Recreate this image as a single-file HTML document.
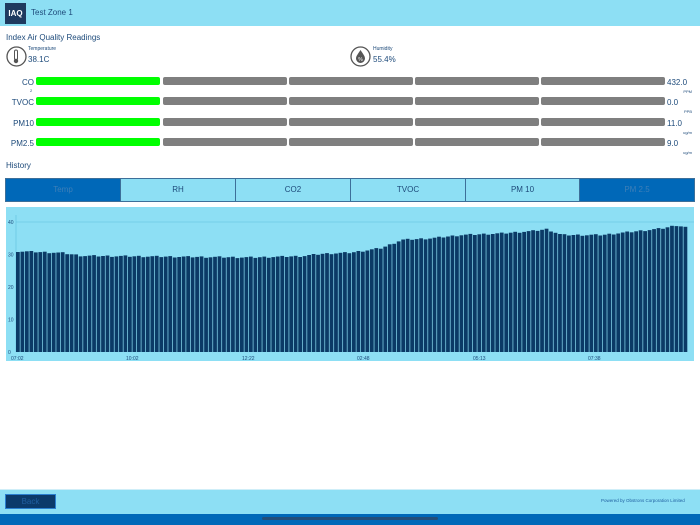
<!DOCTYPE html><html><head><meta charset="utf-8"><style>
*{margin:0;padding:0;box-sizing:border-box}
body{width:700px;height:525px;position:relative;background:#fff;font-family:"Liberation Sans",sans-serif;color:#1d4a7a;overflow:hidden}
.hdr{position:absolute;left:0;top:0;width:700px;height:26px;background:#8ddff4}
.logo{position:absolute;left:5px;top:3px;width:21px;height:21px;background:#1e3a5f;color:#fff;font-weight:bold;font-size:8px;line-height:21px;text-align:center}
.t{position:absolute;white-space:nowrap}
.lb{position:absolute;right:666px;font-size:8px;white-space:nowrap}
.bar{position:absolute;height:8px;border-radius:2px;background:#7f7f7f}
.g{background:#00ff00}
.tab{position:absolute;top:178px;height:24px;background:#8ddff4;border:1px solid #3d6f99;font-size:8px;text-align:center;line-height:22px;color:#1d4a7a}
.sel{background:#0068b8;color:#3d7fb8}
.u{position:absolute;right:8px;font-size:4px;white-space:nowrap}
</style></head><body>
<div class="hdr"><div class="logo">IAQ</div><div class="t" style="left:31px;top:8px;font-size:8px">Test Zone 1</div></div>
<div class="t" style="left:6px;top:33px;font-size:8px">Index Air Quality Readings</div>
<svg style="position:absolute;left:6px;top:46px" width="21" height="21"><circle cx="10.5" cy="10.5" r="9.5" fill="none" stroke="#555" stroke-width="1.3"/><rect x="8.5" y="4" width="3" height="10" rx="1.5" fill="none" stroke="#555"/><circle cx="10" cy="15" r="2.2" fill="#555"/></svg>
<div class="t" style="left:28px;top:46px;font-size:5px">Temperature</div>
<div class="t" style="left:28px;top:55px;font-size:8px">38.1C</div>
<svg style="position:absolute;left:350px;top:46px" width="21" height="21"><circle cx="10.5" cy="10.5" r="9.5" fill="none" stroke="#555" stroke-width="1.3"/><path d="M10.5 4 C8 8 6 10 6 12.5 A4.5 4.5 0 0 0 15 12.5 C15 10 13 8 10.5 4Z" fill="#555"/><text x="10.5" y="15" font-size="5" fill="#fff" text-anchor="middle">%</text></svg>
<div class="t" style="left:373px;top:46px;font-size:5px">Humidity</div>
<div class="t" style="left:373px;top:55px;font-size:8px">55.4%</div>

<div class="lb" style="top:78px">CO</div><div class="t" style="left:30px;top:88px;font-size:4px">2</div>
<div class="lb" style="top:98px">TVOC</div>
<div class="lb" style="top:119px">PM10</div>
<div class="lb" style="top:139px">PM2.5</div>
<div id="bars"></div>
<div class="t" style="left:667px;top:78px;font-size:8px">432.0</div><div class="u" style="top:89px">PPM</div>
<div class="t" style="left:667px;top:98px;font-size:8px">0.0</div><div class="u" style="top:109px">PPB</div>
<div class="t" style="left:667px;top:119px;font-size:8px">11.0</div><div class="u" style="top:130px">ug/m</div>
<div class="t" style="left:667px;top:139px;font-size:8px">9.0</div><div class="u" style="top:150px">ug/m</div>

<div class="t" style="left:6px;top:161px;font-size:8px">History</div>
<div class="tab sel" style="left:5px;width:116px">Temp</div>
<div class="tab" style="left:120px;width:116px">RH</div>
<div class="tab" style="left:235px;width:116px">CO2</div>
<div class="tab" style="left:350px;width:116px">TVOC</div>
<div class="tab" style="left:465px;width:115px">PM 10</div>
<div class="tab sel" style="left:579px;width:116px">PM 2.5</div>
<svg id="ch" style="position:absolute;left:6px;top:207px" width="688" height="154"></svg>

<div style="position:absolute;left:0;top:489px;width:700px;height:25px;background:#8ddff4;border-top:1px solid #cfeef8"></div>
<div style="position:absolute;left:5px;top:494px;width:51px;height:15px;background:#0b3a6a;border:1px solid #2a7fd0;color:#1f5fa0;font-size:8px;text-align:center;line-height:13px">Back</div>
<div class="t" style="left:601px;top:498px;font-size:4.5px;color:#1f5fa0">Powered by Obstrons Corporation Limited</div>
<div style="position:absolute;left:0;top:514px;width:700px;height:11px;background:#0068b8"></div>
<div style="position:absolute;left:262px;top:517px;width:176px;height:3px;border-radius:2px;background:#244e78"></div>
<script>
var b=document.getElementById('bars'),h='';
[80,100,121,141].forEach(function(y){[36,163,289,415,541].forEach(function(x,i){h+='<div class="bar'+(i==0?' g':'')+'" style="left:'+x+'px;top:'+(y-3)+'px;width:124px"></div>';});});
b.innerHTML=h;
var s='<rect width="688" height="154" fill="#8ddff4"/>';
var y0=145,k=3.25,X0=10;
[40].forEach(function(v){s+='<line x1="'+X0+'" x2="688" y1="'+(y0-v*k)+'" y2="'+(y0-v*k)+'" stroke="#5fbfdc" stroke-width="0.6"/>';});
s+='<line x1="'+X0+'" x2="'+X0+'" y1="8" y2="'+y0+'" stroke="#5fbfdc" stroke-width="0.6"/>';
[0,10,20,30,40].forEach(function(v){s+='<text x="2" y="'+(y0-v*k+2)+'" font-size="5" fill="#1d4a7a">'+v+'</text>';});
var pts=[[16,31],[60,30.5],[80,29.6],[180,29.3],[250,29.1],[300,29.5],[320,30.2],[350,30.6],[380,32],[400,34.5],[430,35],[460,36],[500,36.5],[530,37.2],[545,37.8],[560,36],[600,36],[630,37],[660,38],[675,39],[690,38]];
function val(x){for(var i=0;i<pts.length-1;i++){if(x<=pts[i+1][0]){var a=pts[i],c=pts[i+1];return a[1]+(c[1]-a[1])*(x-a[0])/(c[0]-a[0]);}}return 38;}
var w=4.48,n=150;
for(var i=0;i<n;i++){var x=10+i*w;var v=val(x+6)+((i*37)%7-3)*0.08;var hh=v*k;s+='<rect x="'+x.toFixed(2)+'" y="'+(y0-hh).toFixed(1)+'" width="'+(w-0.7).toFixed(2)+'" height="'+hh.toFixed(1)+'" fill="#0b3a66"/>';}
[['07:02',5],['10:02',120],['12:22',236],['02:48',351],['05:13',467],['07:38',582]].forEach(function(t){s+='<text x="'+t[1]+'" y="153" font-size="5" fill="#1d4a7a">'+t[0]+'</text>';});
document.getElementById('ch').innerHTML=s;
</script>
</body></html>
